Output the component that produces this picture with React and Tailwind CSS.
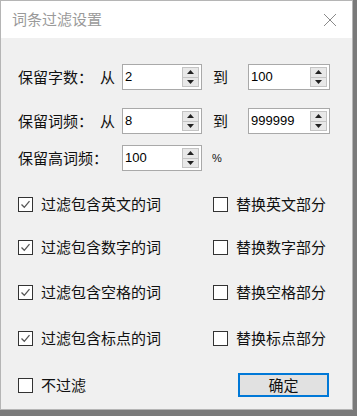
import React from "react";

const cjk = { fontFamily: '"Noto Sans CJK SC", "Noto Sans", sans-serif' };
const num = { fontFamily: '"Liberation Sans", Arial, sans-serif' };

function Spin({ value, w }) {
  return (
    <div className={`relative h-[26px] ${w} border border-[#a9a9a9] bg-white`}>
      <span className="absolute left-[2px] top-[4px] text-[13px] leading-[16px] text-black" style={num}>{value}</span>
      <div className="absolute right-[2px] top-[2px] bottom-[2px] w-[17px] flex flex-col border border-[#c4c4c4] bg-[#e8e8e8]">
        <div className="flex-1 flex items-center justify-center border-b border-[#c4c4c4]">
          <svg width="7" height="4" viewBox="0 0 7 4"><path d="M0 4 L3.5 0 L7 4 Z" fill="#222" /></svg>
        </div>
        <div className="flex-1 flex items-center justify-center">
          <svg width="7" height="4" viewBox="0 0 7 4"><path d="M0 0 L3.5 4 L7 0 Z" fill="#222" /></svg>
        </div>
      </div>
    </div>
  );
}

function Check({ checked, label }) {
  return (
    <div className="flex items-center">
      <div className="w-[15px] h-[15px] border border-[#333] bg-white flex items-center justify-center">
        {checked && (
          <svg width="11" height="11" viewBox="0 0 11 11">
            <path d="M1.5 5.5 L4.3 8.3 L9.5 2.2" fill="none" stroke="#555" strokeWidth="1.3" />
          </svg>
        )}
      </div>
      <span className="ml-[8px] text-[15px] leading-[20px] text-[#111]" style={cjk}>{label}</span>
    </div>
  );
}

export default function App() {
  const rows = [
    ["过滤包含英文的词", "替换英文部分", "mt-[23px]"],
    ["过滤包含数字的词", "替换数字部分", "mt-[23px]"],
    ["过滤包含空格的词", "替换空格部分", "mt-[25px]"],
    ["过滤包含标点的词", "替换标点部分", "mt-[26px]"],
  ];
  return (
    <div className="w-[357px] h-[416px] bg-[#7a7a7a] overflow-hidden">
      <div className="w-[353px] h-[410px] bg-[#f0f0f0] border border-[#b5b5b5] flex flex-col" style={cjk}>
        <div className="h-[37px] bg-white flex items-center justify-between pl-[11px] pr-[14px]">
          <span className="text-[15px] text-[#9a9a9a]" style={cjk}>词条过滤设置</span>
          <svg width="16" height="16" viewBox="0 0 16 16">
            <path d="M2 2 L14 14 M14 2 L2 14" stroke="#8a8a8a" strokeWidth="1" fill="none" />
          </svg>
        </div>
        <div className="flex flex-col pl-[17px]">
          <div className="flex items-center mt-[26px]">
            <span className="w-[82px] text-[15px] text-[#111]">保留字数：</span>
            <span className="w-[22px] text-[15px] text-[#111]">从</span>
            <Spin value="2" w="w-[80px]" />
            <span className="ml-[11px] w-[35px] text-[15px] text-[#111]">到</span>
            <Spin value="100" w="w-[82px]" />
          </div>
          <div className="flex items-center mt-[18px]">
            <span className="w-[82px] text-[15px] text-[#111]">保留词频：</span>
            <span className="w-[22px] text-[15px] text-[#111]">从</span>
            <Spin value="8" w="w-[80px]" />
            <span className="ml-[11px] w-[35px] text-[15px] text-[#111]">到</span>
            <Spin value="999999" w="w-[82px]" />
          </div>
          <div className="flex items-center mt-[11px]">
            <span className="w-[104px] text-[15px] text-[#111]">保留高词频：</span>
            <Spin value="100" w="w-[80px]" />
            <span className="ml-[10px] text-[11px] text-[#111]" style={num}>%</span>
          </div>
          {rows.map(([a, b, m]) => (
            <div key={a} className={`flex items-center ${m}`}>
              <div className="w-[195px]"><Check checked label={a} /></div>
              <Check checked={false} label={b} />
            </div>
          ))}
          <div className="flex items-center mt-[25px]">
            <div className="w-[220px]"><Check checked={false} label="不过滤" /></div>
            <div className="w-[91px] h-[24px] border-2 border-[#0078d7] bg-[#e1e1e1] flex items-center justify-center">
              <span className="text-[15px] text-[#111]">确定</span>
            </div>
          </div>
        </div>
      </div>
    </div>
  );
}
